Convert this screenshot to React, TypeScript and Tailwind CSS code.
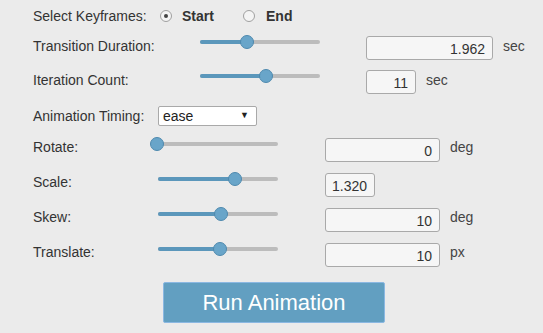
import React from "react";

const Slider = ({ start, width, thumb }: { start: number; width: number; thumb: number }) => (
  <div className="relative h-[14px] shrink-0 mb-[12px]" style={{ width }}>
    <div className="absolute left-0 right-0 top-[5px] h-[4px] rounded-full bg-[#bcbcbc]" />
    <div
      className="absolute left-0 top-[5px] h-[4px] rounded-full bg-[#5b97bb]"
      style={{ width: thumb - start }}
    />
    <div
      className="absolute top-0 h-[14px] w-[14px] rounded-full bg-[#69a5c9] border border-[#4e89ae]"
      style={{ left: thumb - start - 7 }}
    />
  </div>
);

const Field = ({ value, w, unit }: { value: string; w: string; unit?: string }) => (
  <div className="flex items-center">
    <div
      className={`h-[24px] ${w} rounded-[3px] border border-[#a9a9a9] bg-[#f6f6f6] text-right pr-[7px] leading-[24px] text-[14px] text-[#333]`}
    >
      {value}
    </div>
    {unit && <span className="ml-[10px] mb-[4px] text-[14px] text-[#444]">{unit}</span>}
  </div>
);

const Radio = ({ on }: { on?: boolean }) => (
  <div className="w-[12px] h-[12px] rounded-full border border-[#a0a0a0] bg-[#f4f4f4] flex items-center justify-center">
    {on && <div className="w-[4px] h-[4px] rounded-full bg-[#444]" />}
  </div>
);

export default function App() {
  return (
    <div
      className="w-[543px] h-[333px] bg-[#ebebeb] text-[#333] text-[14px] overflow-hidden"
      style={{ fontFamily: '"Liberation Sans", Arial, sans-serif' }}
    >
      <div className="pl-[33px]">
        <div className="h-[32px] flex items-center">
          <span className="w-[127px]">Select Keyframes:</span>
          <Radio on />
          <span className="ml-[10px] font-bold w-[61px]">Start</span>
          <Radio />
          <span className="ml-[11px] font-bold">End</span>
        </div>

        <div className="h-[32px] flex items-center">
          <span className="w-[167px] mb-[4px]">Transition Duration:</span>
          <Slider start={200} width={120} thumb={247} />
          <div className="ml-[46px]">
            <Field value="1.962" w="w-[127px]" unit="sec" />
          </div>
        </div>

        <div className="h-[36px] flex items-center">
          <span className="w-[167px] mb-[4px]">Iteration Count:</span>
          <Slider start={200} width={120} thumb={266} />
          <div className="ml-[46px]">
            <Field value="11" w="w-[50px]" unit="sec" />
          </div>
        </div>

        <div className="h-[32px] flex items-center">
          <span className="w-[125px]">Animation Timing:</span>
          <div className="h-[20px] w-[99px] border border-[#a9a9a9] bg-white rounded-[2px] flex items-center justify-between px-[4px] text-[14px] text-[#222]">
            <span>ease</span>
            <span className="text-[9px] mr-[3px]">▼</span>
          </div>
        </div>

        {[
          { label: "Rotate:", thumb: 157, value: "0", w: "w-[115px]", unit: "deg" },
          { label: "Scale:", thumb: 235, value: "1.320", w: "w-[50px]", unit: undefined },
          { label: "Skew:", thumb: 221, value: "10", w: "w-[115px]", unit: "deg" },
          { label: "Translate:", thumb: 220, value: "10", w: "w-[115px]", unit: "px" },
        ].map((r) => (
          <div key={r.label} className="h-[35px] flex items-center">
            <span className="w-[125px] mb-[4px]">{r.label}</span>
            <Slider start={158} width={120} thumb={r.thumb} />
            <div className="ml-[47px]">
              <Field value={r.value} w={r.w} unit={r.unit} />
            </div>
          </div>
        ))}
      </div>

      <div className="mt-[10px] ml-[163px] w-[222px] h-[41px] bg-[#629fc1] border border-[#8bb8e2] rounded-[2px] flex items-center justify-center text-white text-[22px]">
        Run Animation
      </div>
    </div>
  );
}
